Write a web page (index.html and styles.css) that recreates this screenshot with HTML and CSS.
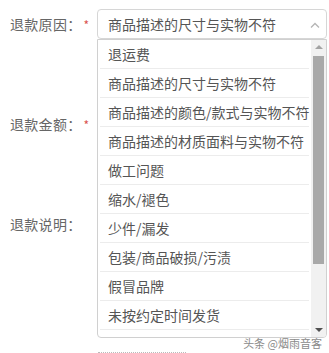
FILE: index.html
```html
<!DOCTYPE html>
<html lang="zh-CN">
<head>
    <meta charset="UTF-8">
    <meta name="viewport" content="width=device-width, initial-scale=1.0">
    <title>申请退款</title>
    <link rel="stylesheet" href="styles.css">
</head>
<body>
<div class="refund-form">

    <div class="form-row reason-row">
        <label class="form-label">退款原因<span class="colon">：</span><span class="required">*</span></label>
        <div class="select-wrap">
            <div class="select-box">
                <span class="select-value">商品描述的尺寸与实物不符</span>
                <svg class="select-arrow" width="10" height="6" viewBox="0 0 10 6">
                    <path d="M1 5.5 L5 1.5 L9 5.5" fill="none" stroke="#b5b5b5" stroke-width="1.3"/>
                </svg>
            </div>

            <!-- 下拉列表 -->
            <div class="dropdown">
                <ul class="option-list">
                    <li><span>退运费</span></li>
                    <li><span>商品描述的尺寸与实物不符</span></li>
                    <li><span>商品描述的颜色/款式与实物不符</span></li>
                    <li><span>商品描述的材质面料与实物不符</span></li>
                    <li><span>做工问题</span></li>
                    <li><span>缩水/褪色</span></li>
                    <li><span>少件/漏发</span></li>
                    <li><span>包装/商品破损/污渍</span></li>
                    <li><span>假冒品牌</span></li>
                    <li><span>未按约定时间发货</span></li>
                    <li><span>&nbsp;</span></li>
                </ul>
                <div class="scrollbar">
                    <span class="scroll-up"></span>
                    <div class="scroll-track">
                        <div class="scroll-thumb"></div>
                    </div>
                    <span class="scroll-down"></span>
                </div>
            </div>
        </div>
    </div>

    <div class="form-row amount-row">
        <label class="form-label">退款金额<span class="colon">：</span><span class="required">*</span></label>
    </div>

    <div class="form-row desc-row">
        <label class="form-label">退款说明<span class="colon">：</span></label>
    </div>

    <div class="upload-line"></div>
</div>

<div class="watermark">头条 @烟雨音客</div>
</body>
</html>
```

FILE: styles.css
```css
body {
    margin: 0;
    background-color: #fff;
    color: #555;
    font-family: "Noto Sans CJK SC", "Noto Sans", sans-serif;
    font-size: 14px;
    overflow: hidden;
}

.refund-form {
    padding: 9px 0 0 10px;
}

.form-row {
    display: flex;
    align-items: flex-start;
}

.form-label {
    width: 87px;
    line-height: 30px;
    color: #666;
    letter-spacing: 0.3px;
}

.colon {
    font-family: "Noto Sans CJK TC", sans-serif;
}

.required {
    margin-left: 2px;
    color: #d9534f;
    font-size: 12px;
}

.amount-row {
    margin-top: 69px;
}

.desc-row {
    margin-top: 69px;
}

.select-wrap {
    position: relative;
    width: 230px;
}

.select-box {
    display: flex;
    align-items: center;
    justify-content: space-between;
    height: 28px;
    padding: 0 6px 0 10px;
    border: 1px solid #d6d6d6;
    border-radius: 4px;
    color: #555;
}

.select-arrow {
    margin-top: 1px;
}

.dropdown {
    position: absolute;
    top: 30px;
    left: 0;
    width: 228px;
    height: 297px;
    display: flex;
    border: 1px solid #d0d0d0;
    border-radius: 0 0 4px 4px;
    background-color: #fff;
    z-index: 10;
    overflow: hidden;
}

.option-list {
    flex: 1;
    list-style-type: none;
    margin: 0;
    padding: 0;
    overflow: hidden;
}

.option-list li {
    margin: 0 2px 0 2px;
    padding-left: 8px;
    height: 28px;
    line-height: 28px;
    border-bottom: 1px solid #ececec;
    color: #555;
    white-space: nowrap;
}

.scrollbar {
    width: 15px;
    display: flex;
    flex-direction: column;
    align-items: center;
    background-color: #f1f1f1;
}

.scroll-up,
.scroll-down {
    width: 0;
    height: 0;
    border-left: 4px solid transparent;
    border-right: 4px solid transparent;
    margin: 5px 0;
}

.scroll-up {
    border-bottom: 4px solid #a3a3a3;
}

.scroll-down {
    border-top: 4px solid #505050;
}

.scroll-track {
    flex: 1;
    width: 100%;
    display: flex;
    justify-content: center;
}

.scroll-thumb {
    width: 11px;
    height: 208px;
    margin-top: 2px;
    background-color: #a9a9a9;
}

.upload-line {
    width: 88px;
    margin: 113px 0 0 88px;
    border-top: 1px dotted #bbb;
}

.watermark {
    position: absolute;
    right: 7px;
    top: 335px;
    font-size: 11px;
    color: #8a8a8a;
    white-space: nowrap;
}
```
